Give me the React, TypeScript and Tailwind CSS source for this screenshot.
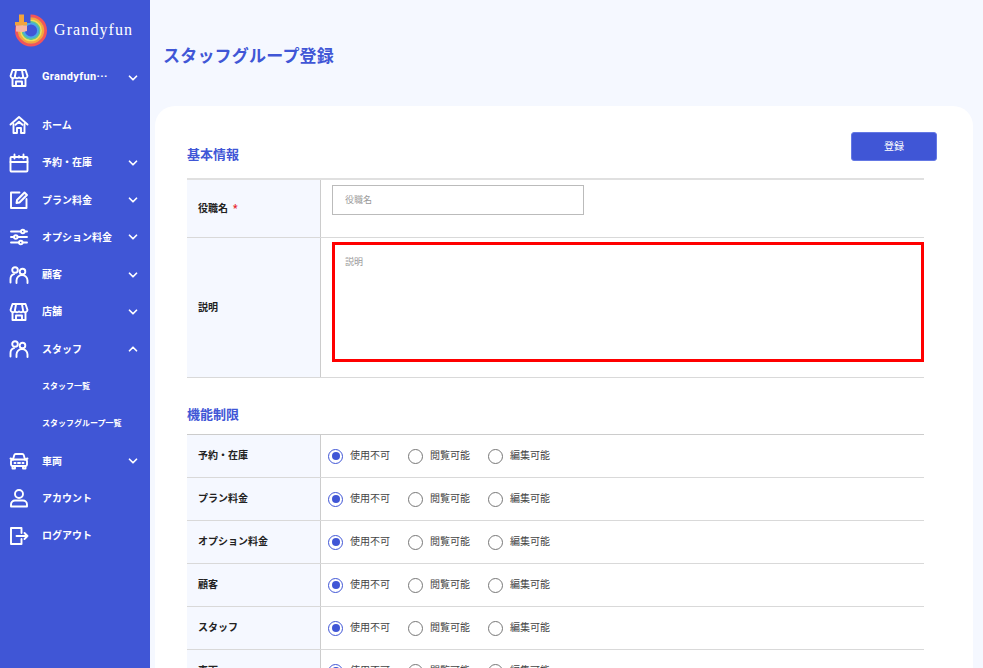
import { ChevronDown, ChevronUp } from "lucide-react";
import type { ReactNode } from "react";

const fontStack = "font-['Roboto','Noto_Sans_CJK_JP',sans-serif]";

function Icon({ children }: { children: ReactNode }) {
  return (
    <svg
      width="20"
      height="20"
      viewBox="0 0 20 20"
      fill="none"
      stroke="white"
      strokeWidth="1.9"
      strokeLinecap="round"
      strokeLinejoin="round"
    >
      {children}
    </svg>
  );
}

const StoreIcon = () => (
  <Icon>
    <path d="M3.500 2h13l2 6a2.400 2.400 0 0 1-4.300 1.200A2.800 2.800 0 0 1 10 9.400a2.800 2.800 0 0 1-4.200-.2A2.400 2.400 0 0 1 1.500 8z" />
    <path d="M7 2.500 5.800 9M13 2.500 14.200 9" />
    <path d="M3.500 10.500V18h13v-7.500" />
    <path d="M7 18v-4.500h6V18" />
  </Icon>
);
const HomeIcon = () => (
  <Icon>
    <path d="M1.500 9.500 10 2l8.500 7.500" />
    <path d="M4.500 9V18h3.500v-5h4v5h3.500V9" />
    <path d="M6.500 9.800 10 6.700l3.500 3.100" />
  </Icon>
);
const CalendarIcon = () => (
  <Icon>
    <rect x="1.500" y="4" width="17" height="14.500" rx="1" />
    <path d="M1.500 9h17M5.500 1.500v4M10 3v1.500M14.500 1.500v4" />
  </Icon>
);
const PenIcon = () => (
  <Icon>
    <path d="M10.500 2.500H2v15.500h15.500V9" />
    <path d="M15.500 2.500 18 5l-7.500 7.500-3 .5.500-3z" fill="white" fillOpacity="0.15" />
  </Icon>
);
const SlidersIcon = () => (
  <Icon>
    <path d="M2 4.500h10M15.500 4.500H18M2 10h3M8.500 10H18M2 15.500h8M13.500 15.500H18" />
    <circle cx="13.800" cy="4.500" r="1.800" />
    <circle cx="6.800" cy="10" r="1.800" />
    <circle cx="11.800" cy="15.500" r="1.800" />
  </Icon>
);
const UsersIcon = () => (
  <Icon>
    <circle cx="6" cy="5" r="2.800" />
    <circle cx="13.500" cy="6.500" r="2.800" />
    <path d="M1.500 17.500v-3.500a5 5 0 0 1 3.500-4.800" />
    <path d="M7.500 18v-2.500a5.500 5.500 0 0 1 11 0V18" />
  </Icon>
);
const CarIcon = () => (
  <Icon>
    <path d="M4 8.500 5.300 4a1.500 1.500 0 0 1 1.400-1h6.600a1.500 1.500 0 0 1 1.400 1L16 8.500" />
    <path d="M1.500 7.500 4 8.500M18.500 7.500 16 8.500" />
    <rect x="2" y="8.500" width="16" height="6.500" rx="1.500" />
    <path d="M3.500 15v2.500h2.500V15M14 15v2.500h2.500V15M5.500 12h1M9 12h2M13.500 12h1" />
  </Icon>
);
const UserIcon = () => (
  <Icon>
    <circle cx="10" cy="6" r="4" />
    <path d="M2 18.500v-2a4 4 0 0 1 4-4h8a4 4 0 0 1 4 4v2z" />
  </Icon>
);
const LogoutIcon = () => (
  <Icon>
    <path d="M12.500 7V2H2v16h10.500v-5" />
    <path d="M7.500 10h11M15.500 7l3 3-3 3" />
  </Icon>
);

function Logo() {
  return (
    <svg width="36" height="36" viewBox="0 0 36 36" fill="none">
      <circle cx="18" cy="18.500" r="14.500" stroke="#f2545b" strokeWidth="3" />
      <circle cx="18" cy="18.500" r="12" stroke="#f7a53c" strokeWidth="2.500" />
      <circle cx="18" cy="18.500" r="10" stroke="#f3de55" strokeWidth="2" />
      <circle cx="18" cy="18.500" r="8.500" stroke="#5fc98f" strokeWidth="1.800" />
      <circle cx="18" cy="18.500" r="7" stroke="#4aa7e8" strokeWidth="1.800" />
      <path d="M0 0h17.500v11H0z" fill="#4056d6" />
      <rect x="6" y="2.500" width="5" height="8" fill="#f2a33c" />
      <rect x="2" y="10" width="12" height="3.500" fill="#f2a33c" />
      <path d="M3 13.500h11v5.500l-4 1-7-.5z" fill="#f7b3a4" />
    </svg>
  );
}

type NavItem = {
  label: string;
  icon?: ReactNode;
  arrow?: "down" | "up";
  sub?: boolean;
};

const navItems: NavItem[] = [
  { label: "ホーム", icon: <HomeIcon /> },
  { label: "予約・在庫", icon: <CalendarIcon />, arrow: "down" },
  { label: "プラン料金", icon: <PenIcon />, arrow: "down" },
  { label: "オプション料金", icon: <SlidersIcon />, arrow: "down" },
  { label: "顧客", icon: <UsersIcon />, arrow: "down" },
  { label: "店舗", icon: <StoreIcon />, arrow: "down" },
  { label: "スタッフ", icon: <UsersIcon />, arrow: "up" },
  { label: "スタッフ一覧", sub: true },
  { label: "スタッフグループ一覧", sub: true },
  { label: "車両", icon: <CarIcon />, arrow: "down" },
  { label: "アカウント", icon: <UserIcon /> },
  { label: "ログアウト", icon: <LogoutIcon /> },
];

function NavRow({ item, wide }: { item: NavItem; wide?: boolean }) {
  const size = item.sub ? "text-[8px]" : wide ? "text-[11px] tracking-[0.35px]" : "text-[10px]";
  return (
    <div className="flex h-[37.3px] items-center pl-[9px] pr-[10px] text-white">
      <div className="flex w-[33px] shrink-0 items-center">{item.icon}</div>
      <span className={`flex-1 font-bold whitespace-nowrap ${size}`}>{item.label}</span>
      {item.arrow === "down" && <ChevronDown size={14} strokeWidth={3} />}
      {item.arrow === "up" && <ChevronUp size={14} strokeWidth={3} />}
    </div>
  );
}

function Sidebar() {
  return (
    <aside className="flex h-full w-[150px] shrink-0 flex-col bg-[#4056d6]">
      <div className="flex h-[59px] items-center pl-[13px]">
        <Logo />
        <span className="ml-[5px] font-['Liberation_Serif',serif] text-[16px] tracking-[1.1px] text-white">Grandyfun</span>
      </div>
      <NavRow wide item={{ label: "Grandyfun···", icon: <StoreIcon />, arrow: "down" }} />
      <div className="h-[10.500px]" />
      {navItems.map((item) => (
        <NavRow key={item.label} item={item} />
      ))}
    </aside>
  );
}

function Radio({ label, checked }: { label: string; checked?: boolean }) {
  return (
    <label className="flex w-[80px] items-center gap-[7px] text-[10px] text-[#444]">
      <span
        className={`flex h-[15px] w-[15px] items-center justify-center rounded-full border-[1.5px] bg-white ${
          checked ? "border-[#4056d6]" : "border-[#777]"
        }`}
      >
        {checked && <span className="h-[8px] w-[8px] rounded-full bg-[#4056d6]" />}
      </span>
      <span className="pb-[2px]">{label}</span>
    </label>
  );
}

const permissions = ["予約・在庫", "プラン料金", "オプション料金", "顧客", "スタッフ", "車両"];

export default function App() {
  return (
    <div className={`flex h-screen overflow-hidden bg-[#f5f8ff] ${fontStack}`}>
      <Sidebar />
      <main className="flex-1 overflow-hidden pl-[5px] pr-[10px]">
        <h1 className="flex h-[106px] items-center pl-[8px] pt-[7px] text-[17px] tracking-[0.2px] font-bold text-[#4056d6]">
          スタッフグループ登録
        </h1>
        <div className="rounded-t-[20px] bg-white pb-[40px] pl-[32px] pr-[49px] pt-[26px]">
          <div className="relative flex h-[46px] items-start">
            <h2 className="pt-[15px] text-[13px] leading-[16px] font-bold text-[#4056d6]">基本情報</h2>
            <button className="absolute right-[-13px] top-0 h-[29px] w-[86px] rounded-[3px] border border-[#6478e4] bg-[#4056d6] text-[10px] text-white">
              登録
            </button>
          </div>
          <div className="border-t-2 border-[#e0e0e0]">
            <div className="flex h-[58px] border-b border-[#d9d9d9]">
              <div className="flex w-[134px] items-center gap-[5px] border-r border-[#ccc] bg-[#f5f8ff] pl-[11px] text-[10px] font-bold text-[#222]">
                役職名 <span className="text-[#e8212b]">*</span>
              </div>
              <div className="pl-[11px] pt-[5px]">
                <input
                  placeholder="役職名"
                  className="h-[30px] w-[252px] border border-[#bbb] px-[12px] text-[9px] placeholder:text-[#999]"
                />
              </div>
            </div>
            <div className="flex h-[140px] border-b border-[#d9d9d9]">
              <div className="flex w-[134px] items-center border-r border-[#ccc] bg-[#f5f8ff] pl-[11px] text-[10px] font-bold text-[#222]">
                説明
              </div>
              <div className="flex-1 pl-[11px] pt-[4px]">
                <textarea
                  placeholder="説明"
                  className="block h-[120px] w-full resize-none border-[3px] border-[#ff0000] px-[10px] pb-[10px] pt-[11px] text-[9px] placeholder:text-[#999]"
                />
              </div>
            </div>
          </div>
          <h2 className="pb-[11px] pt-[29px] text-[13px] leading-[16px] font-bold text-[#4056d6]">機能制限</h2>
          <div className="border-t border-[#ccc]">
            {permissions.map((name) => (
              <div key={name} className="flex h-[43px] border-b border-[#d9d9d9]">
                <div className="flex w-[134px] items-center border-r border-[#ccc] bg-[#f5f8ff] pb-[2px] pl-[11px] text-[10px] font-bold text-[#222]">
                  {name}
                </div>
                <div className="flex items-center pl-[7px]">
                  <Radio label="使用不可" checked />
                  <Radio label="閲覧可能" />
                  <Radio label="編集可能" />
                </div>
              </div>
            ))}
          </div>
        </div>
      </main>
    </div>
  );
}
